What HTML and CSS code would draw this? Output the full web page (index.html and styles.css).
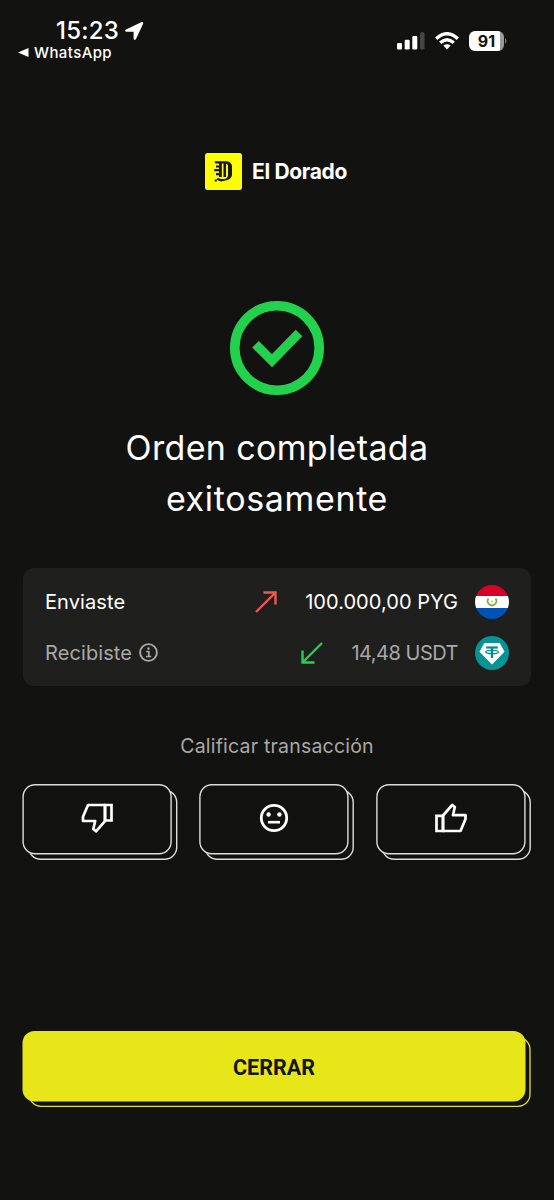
FILE: index.html
```html
<!DOCTYPE html>
<html lang="es">
<head>
<meta charset="utf-8">
<title>El Dorado</title>
<link rel="stylesheet" href="styles.css">
</head>
<body>
<main class="screen">
  <header class="status">
    <div class="status-left">
      <div class="clock"><span class="time">15:23</span>
        <svg width="20" height="20" viewBox="0 0 20 20"><path d="M1.500 8.800 17.200 1.200Q19.800.4 19 3L12 18Q10.300 20 9.600 17.800V10.800H2.400Q-.2 10.200 1.500 8.800Z" fill="#fff"/></svg>
      </div>
      <div class="back"><svg width="11" height="9" viewBox="0 0 11 9"><path d="M0 4.500 10.500 0V9Z" fill="#fff"/></svg><span>WhatsApp</span></div>
    </div>
    <div class="status-right">
      <svg width="28" height="18" viewBox="0 0 28 18"><g fill="#fff"><rect x="0" y="11" width="5" height="6.500" rx="1.300"/><rect x="7.700" y="7.700" width="5" height="9.800" rx="1.300"/><rect x="15.300" y="4" width="5" height="13.500" rx="1.300"/></g><rect x="23" y="0.300" width="4.500" height="17.200" rx="1.300" fill="#454543"/></svg>
      <svg class="wifi" width="24" height="18" viewBox="0 0 24 18"><g fill="none" stroke="#fff" stroke-width="3.400"><path d="M1.200 6.700Q12-3.200 22.800 6.700"/><path d="M5.200 10.800Q12 4.600 18.800 10.800"/></g><path d="M8.300 13.600Q12 10.700 15.700 13.600L12 17.600Z" fill="#fff"/></svg>
      <div class="battery"><span>91</span></div>
      <svg class="battery-tip" width="3" height="8" viewBox="0 0 3 8"><path d="M0 1Q3 4 0 7Z" fill="#777"/></svg>
    </div>
  </header>

  <div class="brand">
    <svg width="37" height="37" viewBox="0 0 37 37"><rect width="37" height="37" rx="2.500" fill="#fdfd04"/><g fill="#171806"><path d="M9.500 8.200H21.500Q26.500 9 27 13V22Q26.500 26 21.500 27.200L16 28.500 11.500 26.800 12.500 25 16 26H19.500Q23 25 23 22V13Q23 10.600 20 10.500H10.500Z"/><rect x="14" y="10" width="2.800" height="14"/><rect x="18.500" y="10" width="2.500" height="14"/><path d="M11 12.500H15V14.500H11ZM9.200 16H15V18.300H9.200ZM11 20H15V22.300H11Z"/><rect x="9.800" y="26.500" width="2" height="2"/></g></svg>
    <span class="brand-name">El Dorado</span>
  </div>

  <svg class="success" width="94" height="94" viewBox="0 0 94 94"><g fill="none" stroke="#22d24d"><circle cx="47" cy="47" r="42.200" stroke-width="9.600"/><path d="M25.500 43.200 42 59.700 69 32" stroke-width="9.200"/></g></svg>

  <h1 class="title"><span class="title-a">Orden completada</span><br><span class="title-b">exitosamente</span></h1>

  <section class="summary">
    <div class="row">
      <span class="label sent">Enviaste</span>
      <svg class="arrow" width="22" height="22" viewBox="0 0 22 22"><path d="M1 21 20 2M8.500 1.500H20.500V13.500" fill="none" stroke="#ef5754" stroke-width="2.400"/></svg>
      <span class="amount pyg">100.000,00 PYG</span>
      <svg class="coin" width="34" height="34" viewBox="0 0 34 34"><clipPath id="disc"><circle cx="17" cy="17" r="17"/></clipPath><g clip-path="url(#disc)"><path d="M0 0H34V11H0Z" fill="#d80027"/><path d="M0 11H34V23H0Z" fill="#fff"/><path d="M0 23H34V34H0Z" fill="#0052b4"/></g><path d="M13.500 13.500A4.300 4.300 0 1 0 20.500 13.500" fill="none" stroke="#83a93a" stroke-width="1.700"/><circle cx="17" cy="16.500" r="1.100" fill="#e8c647"/></svg>
    </div>
    <div class="row muted">
      <span class="label got">Recibiste</span>
      <svg class="info" width="19" height="19" viewBox="0 0 19 19"><circle cx="9.500" cy="9.500" r="8.400" fill="none" stroke="#aaa9a6" stroke-width="1.900"/><path d="M7.200 8.500H9.800V13.500M7 13.500H12.200" fill="none" stroke="#aaa9a6" stroke-width="1.700"/><circle cx="9.500" cy="5.500" r="1.200" fill="#aaa9a6"/></svg>
      <svg class="arrow" width="22" height="22" viewBox="0 0 22 22"><path d="M21 1 2 20M1.500 8.500V20.500H13.500" fill="none" stroke="#22d24d" stroke-width="2.400"/></svg>
      <span class="amount usdt">14,48 USDT</span>
      <svg class="coin" width="34" height="34" viewBox="0 0 34 34"><circle cx="17" cy="17" r="17" fill="#069494"/><path d="M9.300 7H24.700L29.500 15.800 17 28.500 4.500 15.800Z" fill="#fff"/><g fill="none" stroke="#078b8b"><path d="M11.200 11.500H22.800" stroke-width="2.200"/><path d="M17 11.500V22" stroke-width="2.400"/><ellipse cx="17" cy="16" rx="6.400" ry="1.700" stroke-width="1.200"/></g></svg>
    </div>
  </section>

  <p class="rate-title">Calificar transacción</p>
  <div class="rates">
    <button class="rate" aria-label="Mala">
      <svg class="frame" width="155" height="76" viewBox="0 0 155 76"><g fill="#121210" stroke="#deded9" stroke-width="1.400"><rect x="6.700" y="6.200" width="148" height="69" rx="12"/><rect x="1.100" y=".7" width="148" height="69" rx="12"/></g></svg>
      <svg class="icon" width="32" height="30" viewBox="0 0 32 30"><g fill="none" stroke="#fff" stroke-width="2.700" stroke-linejoin="round"><path d="M24 2H7L2 13.700V18H14.200L12.300 26 15 28.300 24 18.200Z"/><path d="M24 2H30.500V17.500H24Z" stroke-linejoin="miter"/></g></svg>
    </button>
    <button class="rate" aria-label="Regular">
      <svg class="frame" width="155" height="76" viewBox="0 0 155 76"><g fill="#121210" stroke="#deded9" stroke-width="1.400"><rect x="6.200" y="6.200" width="148" height="69" rx="12"/><rect x=".9" y=".7" width="148" height="69" rx="12"/></g></svg>
      <svg class="icon" width="30" height="30" viewBox="0 0 30 30"><circle cx="15" cy="15" r="12.700" fill="none" stroke="#fff" stroke-width="2.800"/><circle cx="9.600" cy="11.500" r="2.200" fill="#fff"/><circle cx="20.400" cy="11.500" r="2.200" fill="#fff"/><path d="M9 19.200H21" stroke="#fff" stroke-width="2.600"/></svg>
    </button>
    <button class="rate" aria-label="Buena">
      <svg class="frame" width="155" height="76" viewBox="0 0 155 76"><g fill="#121210" stroke="#deded9" stroke-width="1.400"><rect x="6.200" y="6.200" width="148" height="69" rx="12"/><rect x=".9" y=".7" width="148" height="69" rx="12"/></g></svg>
      <svg class="icon" width="32" height="30" viewBox="0 0 32 30"><g fill="none" stroke="#fff" stroke-width="2.700" stroke-linejoin="round"><path d="M8 28H25.500L30.500 16V12.200H18L19.800 4 17.200 2 8 12.500Z"/><path d="M8 12.800H1.500V28H8Z" stroke-linejoin="miter"/></g></svg>
    </button>
  </div>

  <button class="close">
    <svg class="frame" width="509" height="76" viewBox="0 0 509 76"><rect x="6" y="6.500" width="501" height="68.800" rx="12" fill="#121210" stroke="#dede35" stroke-width="1.300"/><rect x="-.5" width="503" height="70.500" rx="12" fill="#e6e619"/></svg>
    <span>CERRAR</span>
  </button>
</main>
</body>
</html>
```
FILE: styles.css
```css
* { box-sizing: border-box; }
body { margin: 0; background: #121210; }
button { font: inherit; border: 0; padding: 0; background: none; color: inherit; }
svg { display: block; flex: none; }
.screen {
  width: 554px; height: 1200px; padding: 0 23px;
  display: flex; flex-direction: column;
  background: #121210; color: #fff;
  font-family: Inter, "Liberation Sans", sans-serif;
}
.status { height: 70px; flex: none; display: flex; justify-content: space-between; margin: 0 23px 0 -5px; }
.status-left { padding-top: 19px; }
.clock { display: flex; align-items: center; gap: 5px; height: 24px; padding-left: 38px; }
.time { font-size: 24px; line-height: 22px; font-weight: 500; letter-spacing: .2px; }
.back { display: flex; align-items: center; gap: 5px; height: 19px; font-size: 15px; line-height: 17px; font-weight: 500; letter-spacing: .4px; }
.status-right { display: flex; align-items: center; height: 20px; margin-top: 31px; }
.wifi { margin-left: 10px; }
.battery { margin-left: 10px; width: 35px; height: 20px; border-radius: 6px; background: linear-gradient(90deg, #fff 90%, #999 90%); color: #121210; font-size: 16px; font-weight: 700; line-height: 20px; text-align: center; }
.battery-tip { margin-left: 1px; }
.brand { height: 37px; margin: 83px 2px 0 0; display: flex; justify-content: center; align-items: center; gap: 10px; }
.brand-name { font-size: 21px; font-weight: 700; letter-spacing: -.35px; }
.success { margin: 111px auto 0; }
.title { margin: 27px 0 0; font-size: 34px; line-height: 51px; font-weight: 400; text-align: center; white-space: nowrap; }
.title-a { letter-spacing: .35px; }
.title-b { letter-spacing: .65px; }
.summary { height: 118px; margin-top: 44px; flex: none; padding: 8px 22px; border-radius: 11px; background: #1f1f1e; }
.row { height: 51px; display: flex; align-items: center; font-size: 20px; letter-spacing: .1px; }
.muted, .rate-title { color: #aaa9a6; }
.arrow { margin-left: auto; }
.info { margin-left: 7px; }
.amount { margin-left: 28px; }
.pyg { letter-spacing: .05px; }
.usdt { letter-spacing: -.5px; }
.coin { margin-left: 17px; }
.rate-title { margin: 47px 0 0; font-size: 19.500px; line-height: 26px; text-align: center; letter-spacing: .2px; }
.rates { margin: 25px 0 0 -1px; display: grid; grid-template-columns: repeat(3, 155px); justify-content: space-between; }
.rate, .close { position: relative; height: 76px; display: flex; align-items: center; justify-content: center; padding: 0 6px 8px 0; }
.frame { position: absolute; top: 0; left: 0; overflow: visible; }
.icon, .close span { position: relative; }
.close { margin: 171px 0 0; flex: none; color: #151510; font-family: Roboto, sans-serif; font-size: 21.500px; font-weight: 700; letter-spacing: 0; padding-top: 4px; }
```
